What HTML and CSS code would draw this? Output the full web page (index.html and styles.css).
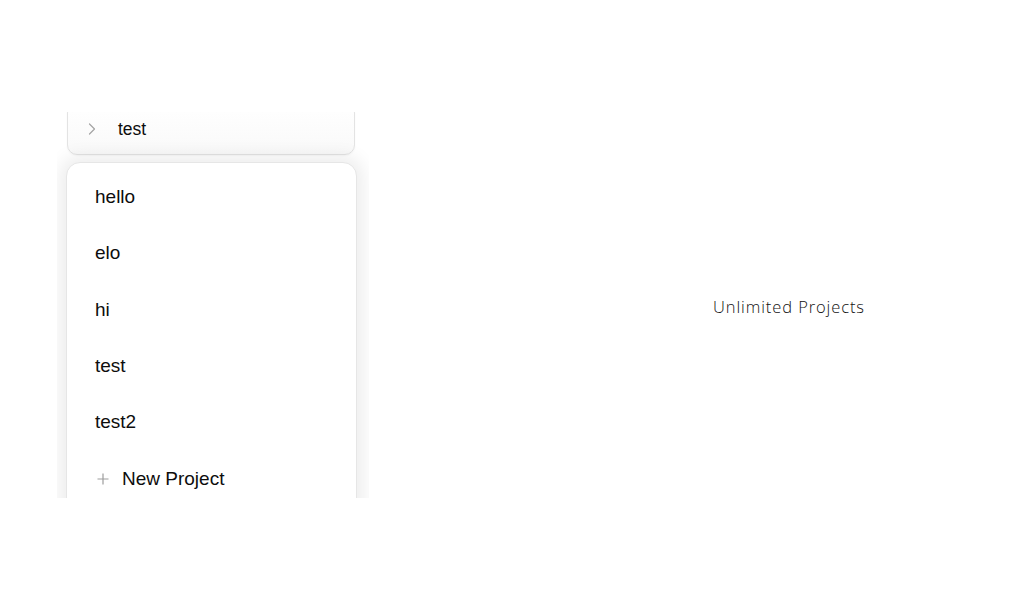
FILE: index.html
```html
<!DOCTYPE html>
<html>
<head>
<meta charset="utf-8">
<link rel="stylesheet" href="styles.css">
</head>
<body>
<div class="page">
  <div class="left">
    <div class="clip">
      <div class="current">
        <svg class="chev" width="8" height="12" viewBox="0 0 8 12"><polyline points="1.5,1 6.5,6 1.5,11" fill="none" stroke="#a3a3a3" stroke-width="1.2" stroke-linecap="round" stroke-linejoin="round"/></svg>
        <span class="current-name">test</span>
      </div>
      <div class="menu">
        <div class="item">hello</div>
        <div class="item">elo</div>
        <div class="item">hi</div>
        <div class="item">test</div>
        <div class="item">test2</div>
        <div class="item new">
          <svg class="plus" width="12" height="12" viewBox="0 0 12 12"><path d="M6 0.5V11.5M0.5 6H11.5" stroke="#9d9d9d" stroke-width="1.2" fill="none"/></svg>
          <span>New Project</span>
        </div>
      </div>
    </div>
  </div>
  <div class="right">
    <span class="tagline">Unlimited Projects</span>
  </div>
</div>
</body>
</html>
```

FILE: styles.css
```css
html, body {
  margin: 0;
  padding: 0;
  background: #ffffff;
}
.page {
  display: flex;
  width: 1024px;
  height: 613px;
}
.left {
  width: 554px;
  flex: none;
}
.clip {
  margin: 112px 0 0 57px;
  width: 312px;
  height: 386px;
  overflow: hidden;
  padding: 0 12px 0 9px;
  box-sizing: border-box;
}
.current {
  margin: -9px 2px 0 1px;
  height: 52px;
  box-sizing: border-box;
  border: 1px solid #e3e3e3;
  border-radius: 10px;
  background: linear-gradient(#ffffff, #f9f9f9);
  display: flex;
  align-items: center;
  padding-left: 20px;
  box-shadow: 0 1px 2px rgba(0,0,0,0.04);
}
.chev {
  margin-right: 22px;
}
.current-name {
  font-family: "Liberation Sans", Arial, sans-serif;
  font-size: 17.5px;
  color: #0d0d0d;
}
.menu {
  margin-top: 7px;
  border: 1px solid #e6e6e6;
  border-radius: 14px;
  background: #fff;
  box-shadow: 0 0 18px 6px rgba(0,0,0,0.075);
  padding-top: 6px;
  height: 400px;
  box-sizing: border-box;
}
.item {
  height: 56.3px;
  display: flex;
  align-items: center;
  padding-left: 28px;
  font-family: "Liberation Sans", Arial, sans-serif;
  font-size: 19px;
  color: #0d0d0d;
}
.new .plus {
  margin: 0 13px 0 2px;
}
.right {
  flex: 1;
  display: flex;
  align-items: center;
  justify-content: center;
}
.tagline {
  font-family: "Open Sans", sans-serif;
  font-weight: 300;
  font-size: 16.5px;
  color: #111;
  letter-spacing: 0.9px;
}
```
